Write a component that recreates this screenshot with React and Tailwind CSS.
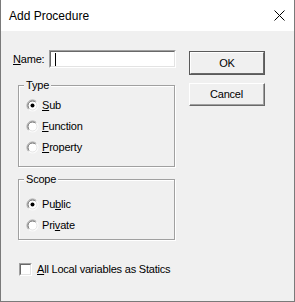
import React from 'react';

const font = "font-['Liberation_Sans',Arial,sans-serif]";

function Radio({ checked }) {
  return (
    <svg width="13" height="13" viewBox="0 0 13 13" className="shrink-0">
      <circle cx="6.5" cy="6.5" r="5.5" fill="#fff" />
      {/* outer ring */}
      <path d="M2.6 10.4 A5.5 5.5 0 0 1 10.4 2.6" fill="none" stroke="#a0a0a0" />
      <path d="M10.4 2.6 A5.5 5.5 0 0 1 2.6 10.4" fill="none" stroke="#ffffff" />
      {/* inner ring */}
      <path d="M3.3 9.7 A4.5 4.5 0 0 1 9.7 3.3" fill="none" stroke="#696969" />
      <path d="M9.7 3.3 A4.5 4.5 0 0 1 3.3 9.7" fill="none" stroke="#e3e3e3" />
      {checked && <circle cx="6.5" cy="6.5" r="2" fill="#000" />}
    </svg>
  );
}

function RadioRow({ checked, children }) {
  return (
    <div className="flex items-center h-[21px] gap-[3px]">
      <Radio checked={checked} />
      <span>{children}</span>
    </div>
  );
}

function Group({ title, className, children }) {
  return (
    <div
      className={
        'relative border border-[#a0a0a0] shadow-[inset_1px_1px_0_#fff,1px_1px_0_#fff] ' +
        className
      }
    >
      {/* legend sits on top of the frame line */}
      <span className="absolute top-[-8px] left-[5px] px-[2px] bg-[#f0f0f0] leading-[14px]">
        {title}
      </span>
      {children}
    </div>
  );
}

function Button({ children, isDefault }) {
  if (isDefault) {
    return (
      <div className="w-[76px] h-[24px] border border-[#5a5a5a]">
        <div className="h-full border-t border-l border-white border-b border-r border-b-[#696969] border-r-[#696969] flex items-center justify-center">
          {children}
        </div>
      </div>
    );
  }
  return (
    <div className="w-[76px] h-[23px] border-t border-l border-white border-b border-r border-b-[#696969] border-r-[#696969]">
      <div className="h-full border-b border-r border-b-[#a0a0a0] border-r-[#a0a0a0] flex items-center justify-center">
        {children}
      </div>
    </div>
  );
}

export default function App() {
  return (
    <div
      className={
        'w-[295px] h-[302px] flex flex-col border-x border-b border-[#7a7a7a] bg-[#f0f0f0] text-black text-[11px] ' +
        font
      }
    >
      {/* Title bar */}
      <div className="h-[31px] bg-white flex items-center justify-between pl-[8px] pr-[9px]">
        <span className="text-[12px]">Add Procedure</span>
        <svg width="11" height="11" viewBox="0 0 11 11">
          <path d="M0.5 0.5 L10.5 10.5 M10.5 0.5 L0.5 10.5" stroke="#000" strokeWidth="1" />
        </svg>
      </div>

      {/* Body */}
      <div className="flex-1 flex pl-[12px] pt-[19px] tracking-[-0.2px]">
        <div className="w-[164px] flex flex-col">
          <div className="flex items-center h-[18px]">
            <span className="w-[36px]">
              <u>N</u>ame:
            </span>
            <div className="w-[127px] h-[18px] border-t border-l border-[#a0a0a0] border-b border-r border-b-white border-r-white">
              <div className="h-full bg-white border-t border-l border-[#696969] border-b border-r border-b-[#e3e3e3] border-r-[#e3e3e3] flex items-center pl-[4px]">
                <div className="w-px h-[13px] bg-black" />
              </div>
            </div>
          </div>

          <Group title="Type" className="mt-[17px] ml-[5px] w-[157px] h-[82px] pt-[9px] pl-[7px]">
            <RadioRow checked>
              <u>S</u>ub
            </RadioRow>
            <RadioRow>
              <u>F</u>unction
            </RadioRow>
            <RadioRow>
              <u>P</u>roperty
            </RadioRow>
          </Group>

          <Group title="Scope" className="mt-[12px] ml-[5px] w-[157px] h-[61px] pt-[14px] pl-[7px]">
            <RadioRow checked>
              Pu<u>b</u>lic
            </RadioRow>
            <RadioRow>
              Pri<u>v</u>ate
            </RadioRow>
          </Group>

          <div className="mt-[23px] ml-[6px] flex items-center gap-[5px] h-[13px]">
            <div className="w-[13px] h-[13px] shrink-0 border-t border-l border-[#a0a0a0] border-b border-r border-b-white border-r-white">
              <div className="h-full bg-white border-t border-l border-[#696969] border-b border-r border-b-[#e3e3e3] border-r-[#e3e3e3]" />
            </div>
            <span className="whitespace-nowrap">
              <u>A</u>ll Local variables as Statics
            </span>
          </div>
        </div>

        <div className="ml-[12px] pt-[1px] flex flex-col gap-[8px]">
          <Button isDefault>OK</Button>
          <Button>Cancel</Button>
        </div>
      </div>
    </div>
  );
}
